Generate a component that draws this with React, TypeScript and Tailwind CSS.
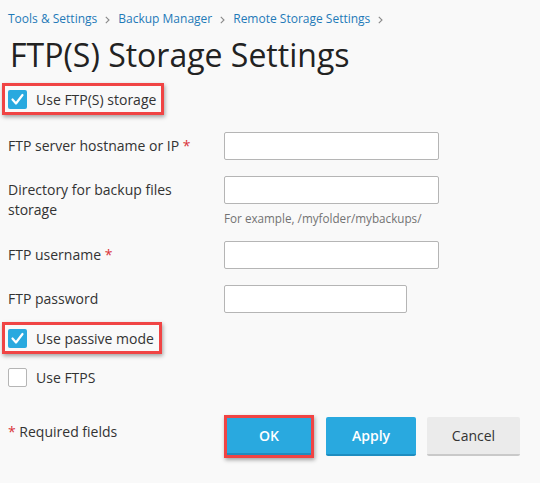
const Check = () => (
  <svg viewBox="0 0 19 19" className="w-[19px] h-[19px]">
    <path d="M4.5 9.5 L8 13.5 L14.5 5" fill="none" stroke="#fff" strokeWidth="2.2" strokeLinecap="round" strokeLinejoin="round" />
  </svg>
);

const Sep = () => (
  <svg viewBox="0 0 5 8" className="w-[5px] h-[8px] mx-[8px] mt-[1px]">
    <path d="M0.8 0.8 L4 4 L0.8 7.2" fill="none" stroke="#8a8a8a" strokeWidth="1.1" />
  </svg>
);

const Checkbox = ({ checked, label }: { checked?: boolean; label: string }) => (
  <div className="flex items-center h-[20px]">
    {checked ? (
      <span className="w-[19px] h-[19px] rounded-[2px] bg-[#29a9df] flex items-center justify-center">
        <Check />
      </span>
    ) : (
      <span className="w-[19px] h-[19px] rounded-[2px] border border-[#b5b5b5] bg-white" />
    )}
    <span className="ml-[9px] text-[14px] text-[#333]">{label}</span>
  </div>
);

const Marked = ({ children }: { children: React.ReactNode }) => (
  <div className="inline-flex items-center h-[32px] border-[3px] border-[#f04444] pl-[3px] pr-[5px] -ml-[6px] shadow-[1px_2px_4px_rgba(0,0,0,0.35)] self-start">
    {children}
  </div>
);

const Field = ({ label, required, width = "w-[215px]", hint }: { label: string; required?: boolean; width?: string; hint?: string }) => (
  <div className="flex items-start">
    <div className="w-[216px] pr-[30px] pt-[4px] text-[14px] leading-[20px] text-[#333]">
      {label}
      {required && <span className="text-[#d9343a]"> *</span>}
    </div>
    <div className="flex flex-col">
      <input className={`${width} h-[28px] bg-white border border-[#b5b5b5] rounded-[2px] outline-none`} />
      {hint && <div className="mt-[6px] text-[11.7px] leading-[16px] text-[#737373]">{hint}</div>}
    </div>
  </div>
);

export default function App() {
  return (
    <div className="min-h-screen bg-[#f9f9f9] font-['Open_Sans',sans-serif] text-[#333] pl-[8px] pt-[11px] flex flex-col">
      <div className="flex items-center h-[16px] text-[12px] text-[#1f7ab8]">
        <span>Tools &amp; Settings</span>
        <Sep />
        <span>Backup Manager</span>
        <Sep />
        <span>Remote Storage Settings</span>
        <Sep />
      </div>
      <h1 className="mt-[6px] h-[44px] leading-[44px] text-[32px] font-normal text-[#222] pl-[2px]">FTP(S) Storage Settings</h1>
      <div className="mt-[6px] flex">
        <Marked>
          <Checkbox checked label="Use FTP(S) storage" />
        </Marked>
      </div>
      <div className="mt-[17px]">
        <Field label="FTP server hostname or IP" required />
      </div>
      <div className="mt-[16px]">
        <Field label="Directory for backup files storage" hint="For example, /myfolder/mybackups/" />
      </div>
      <div className="mt-[15px]">
        <Field label="FTP username" required />
      </div>
      <div className="mt-[16px]">
        <Field label="FTP password" width="w-[183px]" />
      </div>
      <div className="mt-[9px] flex">
        <Marked>
          <Checkbox checked label="Use passive mode" />
        </Marked>
      </div>
      <div className="mt-[13px]">
        <Checkbox label="Use FTPS" />
      </div>
      <div className="mt-[28px] flex items-start">
        <div className="w-[216px] pt-[7px] leading-[20px] text-[14px] text-[#333]">
          <span className="text-[#d9343a]">*</span> Required fields
        </div>
        <div className="flex items-center">
          <div className="border-[3px] border-[#f04444] shadow-[1px_2px_4px_rgba(0,0,0,0.35)]">
            <button className="w-[84px] h-[37px] bg-[#29a9df] border-b-2 border-[#1e8dc0] text-white text-[14px] font-semibold">OK</button>
          </div>
          <button className="ml-[12px] w-[90px] h-[39px] bg-[#29a9df] border-b-2 border-[#1e8dc0] rounded-[2px] text-white text-[14px] font-semibold">Apply</button>
          <button className="ml-[11px] w-[93px] h-[39px] bg-[#ebebeb] border-b-2 border-[#c9c9c9] rounded-[2px] text-[#333] text-[14px]">Cancel</button>
        </div>
      </div>
    </div>
  );
}
